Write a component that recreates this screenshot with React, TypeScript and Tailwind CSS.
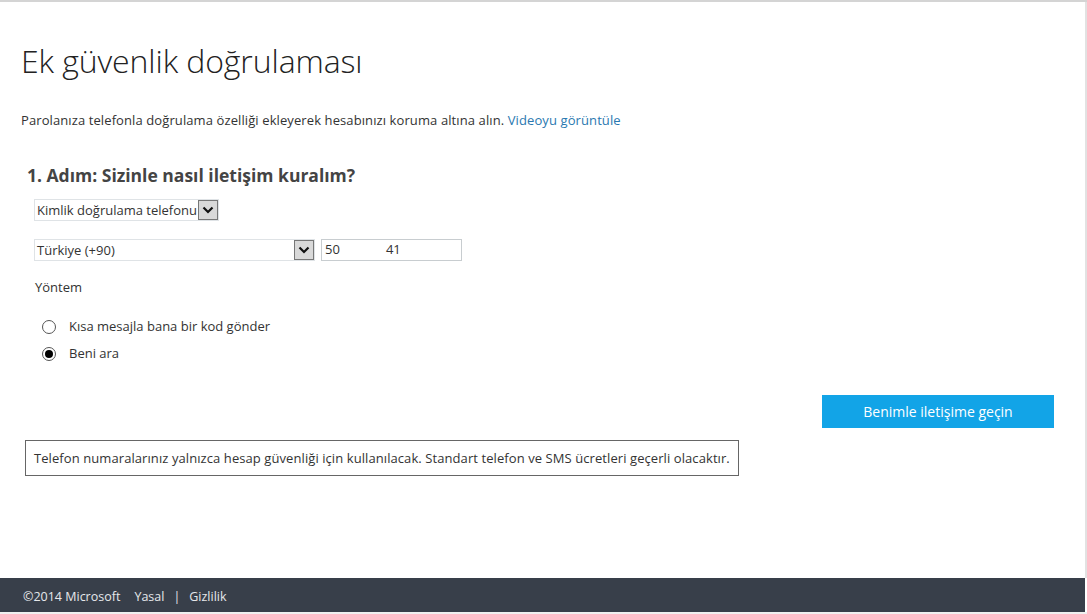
import { useState } from 'react'

function Chevron() {
  return (
    <svg width="12" height="8" viewBox="0 0 12 8" fill="none">
      <path d="M1.5 1.5 L6 6 L10.5 1.5" stroke="#111" strokeWidth="2.2" />
    </svg>
  )
}

function FakeSelect({ label, width }: { label: string; width: string }) {
  return (
    <div className={`flex items-center h-[22px] border border-[#dfe3e6] bg-white ${width}`}>
      <span className="flex-1 pl-[2px] text-[13px] text-[#333] leading-[20px] whitespace-nowrap">{label}</span>
      <span className="flex items-center justify-center shrink-0 w-[20px] h-[20px] bg-[#d9d9d9] border border-[#777]">
        <Chevron />
      </span>
    </div>
  )
}

function Radio({ checked, label, onClick }: { checked: boolean; label: string; onClick: () => void }) {
  return (
    <button onClick={onClick} className="flex items-center gap-[13px] text-left">
      <span className="flex items-center justify-center w-[14px] h-[14px] rounded-full border border-[#555] bg-white">
        {checked && <span className="w-[8px] h-[8px] rounded-full bg-black" />}
      </span>
      <span className="text-[13px] text-[#333]">{label}</span>
    </button>
  )
}

export default function App() {
  const [method, setMethod] = useState<'sms' | 'call'>('call')

  return (
    <div
      className="h-[614px] flex flex-col border-t-2 border-[#d4d4d4] bg-white"
      style={{ fontFamily: '"Open Sans", "Noto Sans", sans-serif' }}
    >
      <div className="flex-1 flex border-r-2 border-[#e2e2e2]">
        <div className="flex-1 pl-[21px] pr-[31px]">
          <h1 className="mt-[37px] text-[32px] leading-[44px] font-light text-[#222] tracking-[-0.1px]">Ek güvenlik doğrulaması</h1>

          <p className="mt-[28px] text-[13px] text-[#333] tracking-[0.1px]">
            Parolanıza telefonla doğrulama özelliği ekleyerek hesabınızı koruma altına alın.{' '}
            <a href="#" className="text-[#2a78b0]">Videoyu görüntüle</a>
          </p>

          <div className="mt-[31px] pl-[6px]">
            <h2 className="text-[17.5px] font-bold text-[#444]">1. Adım: Sizinle nasıl iletişim kuralım?</h2>

            <div className="mt-[11px] pl-[7px] flex flex-col gap-[18px]">
              <FakeSelect label="Kimlik doğrulama telefonu" width="w-[185px]" />
              <div className="flex gap-[6px]">
                <FakeSelect label="Türkiye (+90)" width="w-[281px]" />
                <div className="flex items-center w-[141px] h-[22px] border border-[#c8cdd0] pl-[3px] text-[13px] text-[#333]">
                  <span>50</span>
                  <span className="w-[46px]" />
                  <span>41</span>
                </div>
              </div>
            </div>

            <div className="mt-[17px] pl-[8px] text-[13px] text-[#333]">Yöntem</div>

            <div className="mt-[20px] pl-[15px] flex flex-col gap-[7px]">
              <Radio checked={method === 'sms'} label="Kısa mesajla bana bir kod gönder" onClick={() => setMethod('sms')} />
              <Radio checked={method === 'call'} label="Beni ara" onClick={() => setMethod('call')} />
            </div>
          </div>

          <div className="mt-[32px] flex justify-end">
            <button className="w-[232px] h-[33px] bg-[#12a4e7] text-[14px] text-white">Benimle iletişime geçin</button>
          </div>

          <div className="mt-[12px] ml-[4px] w-[714px] h-[36px] flex items-center border border-[#666] px-[8px] text-[13px] text-[#333] tracking-[0.08px] whitespace-nowrap">
            Telefon numaralarınız yalnızca hesap güvenliği için kullanılacak. Standart telefon ve SMS ücretleri geçerli olacaktır.
          </div>
        </div>
      </div>

      <footer className="h-[34px] mr-[2px] flex items-center bg-[#383f4a] pl-[23px] pt-[4px] text-[12.5px] text-[#e6e8ea]">
        <span>©2014 Microsoft</span>
        <span className="ml-[14px]">Yasal</span>
        <span className="ml-[9px]">|</span>
        <span className="ml-[9px]">Gizlilik</span>
      </footer>
      <div className="h-[2px] bg-[#f0f0f0]" />
    </div>
  )
}
